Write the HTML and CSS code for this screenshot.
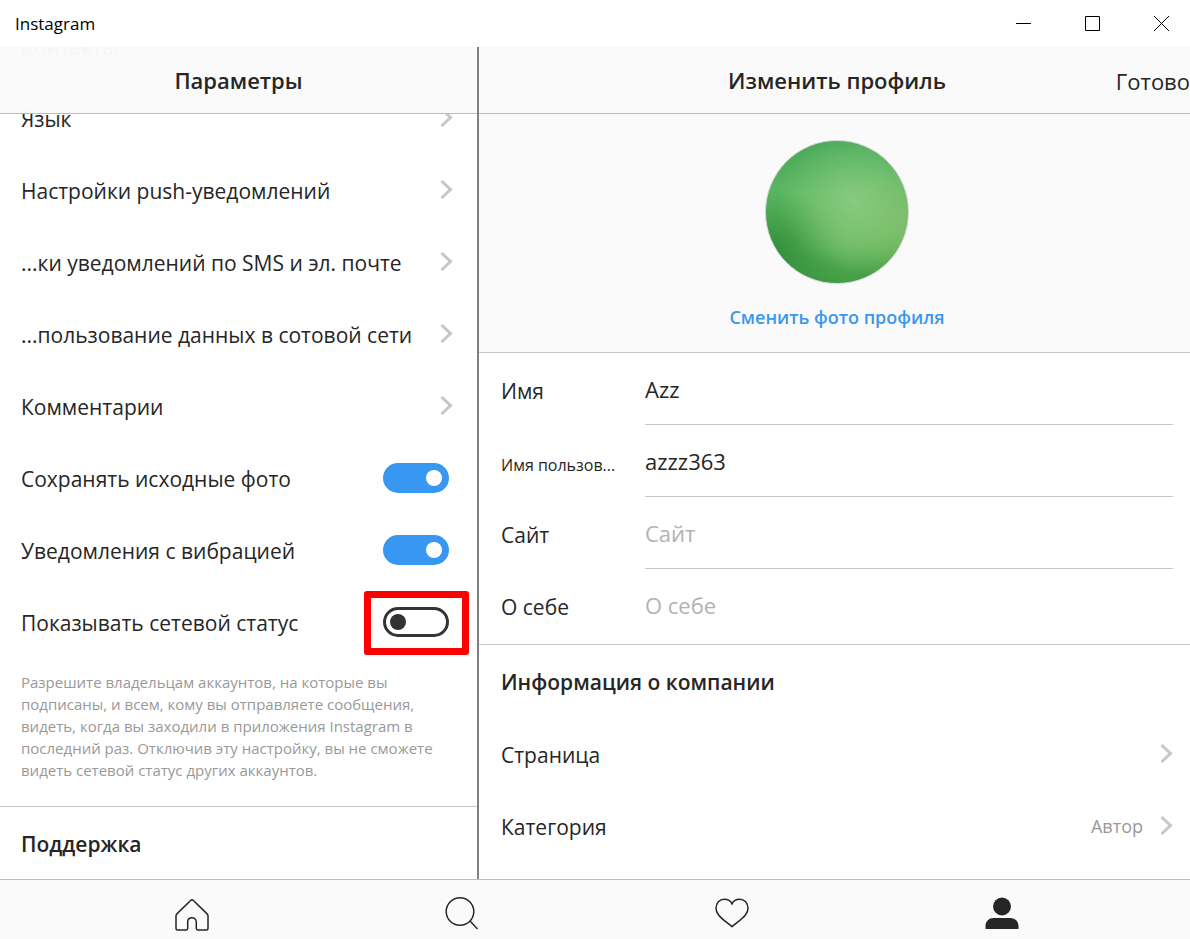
FILE: index.html
```html
<!DOCTYPE html>
<html lang="ru">
<head>
    <meta charset="UTF-8">
    <meta name="viewport" content="width=device-width, initial-scale=1.0">
    <title>Instagram</title>
    <link rel="stylesheet" href="styles.css">
</head>
<body>
    <header class="titlebar">
        <span class="app-name">Instagram</span>
        <div class="window-controls">
            <button class="window-btn" aria-label="Свернуть">
                <svg width="15" height="15" viewBox="0 0 15 15"><path d="M0 7.5h15"/></svg>
            </button>
            <button class="window-btn" aria-label="Развернуть">
                <svg width="15" height="15" viewBox="0 0 15 15"><path d="M.5.5h14v14H.5z"/></svg>
            </button>
            <button class="window-btn" aria-label="Закрыть">
                <svg width="15" height="15" viewBox="0 0 15 15"><path d="M0 0l15 15M15 0L0 15"/></svg>
            </button>
        </div>
    </header>

    <main class="panes">
        <!-- Settings -->
        <section class="pane settings">
            <div class="pane-header settings-header">
                <h1 class="pane-title">Параметры</h1>
            </div>

            <div class="settings-list">
                <a href="#" class="row">
                    <span>Контакты</span>
                    <svg class="chevron" width="13" height="19" viewBox="0 0 13 19"><path d="M1.5 1l9 8.5-9 8.5"/></svg>
                </a>
                <a href="#" class="row">
                    <span>Язык</span>
                    <svg class="chevron" width="13" height="19" viewBox="0 0 13 19"><path d="M1.5 1l9 8.5-9 8.5"/></svg>
                </a>
                <a href="#" class="row">
                    <span>Настройки push-уведомлений</span>
                    <svg class="chevron" width="13" height="19" viewBox="0 0 13 19"><path d="M1.5 1l9 8.5-9 8.5"/></svg>
                </a>
                <a href="#" class="row">
                    <span>...ки уведомлений по SMS и эл. почте</span>
                    <svg class="chevron" width="13" height="19" viewBox="0 0 13 19"><path d="M1.5 1l9 8.5-9 8.5"/></svg>
                </a>
                <a href="#" class="row">
                    <span>...пользование данных в сотовой сети</span>
                    <svg class="chevron" width="13" height="19" viewBox="0 0 13 19"><path d="M1.5 1l9 8.5-9 8.5"/></svg>
                </a>
                <a href="#" class="row">
                    <span>Комментарии</span>
                    <svg class="chevron" width="13" height="19" viewBox="0 0 13 19"><path d="M1.5 1l9 8.5-9 8.5"/></svg>
                </a>
                <div class="row row-toggle">
                    <label for="savePhotos">Сохранять исходные фото</label>
                    <input type="checkbox" class="toggle" id="savePhotos" checked>
                </div>
                <div class="row row-toggle">
                    <label for="vibration">Уведомления с вибрацией</label>
                    <input type="checkbox" class="toggle" id="vibration" checked>
                </div>
                <div class="row row-toggle">
                    <label for="onlineStatus">Показывать сетевой статус</label>
                    <span class="highlight">
                        <input type="checkbox" class="toggle" id="onlineStatus">
                    </span>
                </div>
                <p class="hint">Разрешите владельцам аккаунтов, на которые вы подписаны, и всем, кому вы отправляете сообщения, видеть, когда вы заходили в приложения Instagram в последний раз. Отключив эту настройку, вы не сможете видеть сетевой статус других аккаунтов.</p>
                <h2 class="section-title">Поддержка</h2>
            </div>
        </section>

        <!-- Profile -->
        <section class="pane profile">
            <div class="profile-content">
                <div class="pane-header profile-header">
                    <h1 class="pane-title">Изменить профиль</h1>
                    <button class="done-btn">Готово</button>
                </div>

                <div class="photo">
                    <div class="avatar"></div>
                    <button class="photo-btn">Сменить фото профиля</button>
                </div>

                <form class="profile-form">
                    <div class="field">
                        <label class="field-label" for="name">Имя</label>
                        <input type="text" class="field-input" id="name" value="Azz">
                    </div>
                    <div class="field">
                        <label class="field-label field-label-small" for="username">Имя пользов...</label>
                        <input type="text" class="field-input" id="username" value="azzz363">
                    </div>
                    <div class="field">
                        <label class="field-label" for="site">Сайт</label>
                        <input type="text" class="field-input" id="site" placeholder="Сайт">
                    </div>
                    <div class="field">
                        <label class="field-label" for="bio">О себе</label>
                        <input type="text" class="field-input" id="bio" placeholder="О себе">
                    </div>
                </form>

                <h2 class="section-title">Информация о компании</h2>
                <a href="#" class="row">
                    <span>Страница</span>
                    <svg class="chevron" width="13" height="19" viewBox="0 0 13 19"><path d="M1.5 1l9 8.5-9 8.5"/></svg>
                </a>
                <a href="#" class="row">
                    <span>Категория</span>
                    <span class="row-value">Автор</span>
                    <svg class="chevron" width="13" height="19" viewBox="0 0 13 19"><path d="M1.5 1l9 8.5-9 8.5"/></svg>
                </a>
            </div>
        </section>
    </main>

    <nav class="tabbar">
        <a href="#" class="tab" aria-label="Главная">
            <svg width="36" height="36" viewBox="0 0 36 36"><path d="M2.900 18.900C2.200 19.600 2 20.100 2 20.900v12.500c0 1 .5 1.500 1.500 1.500h8.800c.9 0 1.400-.5 1.400-1.400V27c0-5.700 8.600-5.700 8.600 0v6.500c0 .9.500 1.400 1.400 1.400h8.800c1 0 1.500-.5 1.500-1.500V20.900c0-.8-.2-1.300-.9-2L19.400 5.500c-.9-.9-1.900-.9-2.800 0z"/></svg>
        </a>
        <a href="#" class="tab" aria-label="Поиск">
            <svg width="36" height="36" viewBox="0 0 36 36"><circle cx="16" cy="16.500" r="13.800"/><path d="M26 26l7.500 8"/></svg>
        </a>
        <a href="#" class="tab" aria-label="Действия">
            <svg width="36" height="36" viewBox="0 0 36 36"><path d="M18 31.600C12 26.800 7.500 23.800 4.600 20 2.700 17.600 2 15.700 2 13.200 2 8.200 5.600 4.200 10.300 4.200c3.600 0 6.200 1.500 7.700 4.600 1.500-3.100 4.100-4.600 7.700-4.600 4.700 0 8.300 4 8.300 9 0 2.500-.7 4.400-2.600 6.800-2.900 3.800-7.400 6.800-13.400 11.600z"/></svg>
        </a>
        <a href="#" class="tab tab-active" aria-label="Профиль">
            <svg width="36" height="36" viewBox="0 0 36 36"><circle cx="18" cy="11.500" r="9"/><path d="M1.500 34v-3c0-4.500 3.500-8 8-8h17c4.500 0 8 3.500 8 8v3z"/></svg>
        </a>
    </nav>
</body>
</html>
```

FILE: styles.css
```css
* {
    margin: 0;
    padding: 0;
    box-sizing: border-box;
}

body {
    display: flex;
    flex-direction: column;
    height: 100vh;
    overflow: hidden;
    font-family: 'Open Sans', 'Noto Sans', sans-serif;
    font-size: 21px;
    line-height: 30px;
    color: #262626;
    background: #fff;
}

button,
input {
    font: inherit;
    color: inherit;
    border: none;
    background: none;
}

button {
    cursor: pointer;
}

a {
    color: inherit;
    text-decoration: none;
}

svg {
    display: block;
    fill: none;
}

/* Title bar */
.titlebar {
    display: flex;
    flex-shrink: 0;
    justify-content: space-between;
    height: 47px;
    padding-left: 15px;
}

.app-name {
    font-size: 17px;
    line-height: 47px;
    color: #000;
}

.window-controls {
    display: flex;
}

.window-btn {
    display: flex;
    align-items: center;
    justify-content: center;
    width: 69px;
    padding-left: 12px;
    stroke: #000;
}

/* Panes */
.panes {
    display: grid;
    grid-template-columns: calc(40% + 1px) 1fr;
    flex: 1;
    min-height: 0;
}

.pane {
    position: relative;
    min-width: 0;
    overflow: hidden;
}

.pane-header {
    display: grid;
    align-items: center;
    height: 67px;
    border-bottom: 1px solid #bcbcbc;
    background: rgba(250, 250, 250, 0.98);
}

.pane-title {
    font-size: 22px;
    font-weight: 600;
    text-align: center;
}

.section-title {
    height: 72px;
    padding: 0 22px;
    font-size: 21px;
    font-weight: 600;
    line-height: 74px;
}

.row {
    display: flex;
    align-items: center;
    height: 72px;
    padding: 0 22px;
    white-space: nowrap;
}

.row > :first-child {
    flex: 1;
    padding-top: 2px;
}

.row-value {
    margin-right: 17px;
    font-size: 18px;
    color: #999;
}

.chevron {
    margin-bottom: 2px;
    stroke: #c7c7c7;
    stroke-width: 3;
}

/* Settings */
.settings {
    display: flex;
    flex-direction: column;
    justify-content: flex-end;
}

.settings-header {
    position: absolute;
    top: 0;
    left: 0;
    right: 0;
}

.settings-list {
    flex-shrink: 0;
}

.settings .row {
    padding: 0 24px 0 21px;
}

.settings .row-toggle {
    padding-right: 28px;
}

.settings .section-title {
    padding-left: 21px;
}

.toggle {
    display: block;
    appearance: none;
    width: 66px;
    height: 30px;
    padding: 4px;
    border: 3px solid #333;
    border-radius: 15px;
    cursor: pointer;
}

.toggle::before {
    content: '';
    display: block;
    width: 16px;
    height: 16px;
    border-radius: 50%;
    background: #333;
}

.toggle:checked {
    border-color: #3897f0;
    background: #3897f0;
}

.toggle:checked::before {
    margin-left: auto;
    background: #fff;
}

.highlight {
    position: relative;
}

.highlight::after {
    content: '';
    position: absolute;
    inset: -16px -20px -18px -19px;
    border: 7px solid #f00;
    border-radius: 3px;
    pointer-events: none;
}

.hint {
    padding: 13px 21px 25px;
    border-bottom: 1px solid #c7c7c7;
    font-size: 15px;
    line-height: 22px;
    color: #999;
}

/* Profile */
.profile {
    border-left: 2px solid #808080;
}

/* runs slightly under the window edge */
.profile-content {
    width: calc(100% + 5px);
}

.profile-header {
    grid-template-columns: 1fr auto 1fr;
}

.profile-header .pane-title {
    grid-column: 2;
}

.done-btn {
    justify-self: end;
    padding: 2px 5px 0 0;
    font-size: 22px;
}

.photo {
    display: flex;
    flex-direction: column;
    align-items: center;
    gap: 18px;
    padding: 26px 0 20px;
    border-bottom: 1px solid #c7c7c7;
    background: #fafafa;
}

.avatar {
    width: 144px;
    height: 144px;
    border: 1px solid #d5d5d5;
    border-radius: 50%;
    background:
        radial-gradient(ellipse at 62% 42%, rgba(139, 203, 130, 0.9), rgba(130, 198, 115, 0) 60%),
        radial-gradient(ellipse at 98% 58%, rgba(126, 186, 100, 0.9), rgba(126, 186, 100, 0) 50%),
        radial-gradient(ellipse at 2% 80%, rgba(36, 128, 50, 0.8), rgba(60, 160, 70, 0) 42%),
        linear-gradient(172deg, #45a556 0%, #5cb863 35%, #60b95c 70%, #3c963f 100%);
}

.photo-btn {
    font-size: 18px;
    font-weight: 600;
    color: #3897f0;
}

.profile-form {
    padding: 0 22px 3px;
    border-bottom: 1px solid #c7c7c7;
}

.field {
    display: flex;
    align-items: center;
    height: 72px;
}

.field-label {
    flex: 0 0 144px;
    padding-top: 4px;
}

.field-label-small {
    font-size: 16px;
    padding-top: 8px;
}

.field-input {
    flex: 1;
    min-width: 0;
    height: 72px;
    border-bottom: 1px solid #c7c7c7;
    font-size: 22px;
    outline: none;
}

.field:last-child .field-input {
    border-bottom: none;
}

.field-input::placeholder {
    color: #b2b2b2;
}

.profile .section-title {
    height: 73px;
}

/* Tab bar */
.tabbar {
    display: grid;
    grid-template-columns: repeat(4, 1fr);
    flex-shrink: 0;
    height: 60px;
    padding: 0 53px 0 57px;
    border-top: 1px solid #bcbcbc;
    background: #fafafa;
}

.tab {
    display: flex;
    justify-content: center;
    padding-top: 15px;
    stroke: #262626;
    stroke-width: 1.5;
}

.tab-active {
    stroke: none;
}

.tab-active svg {
    fill: #262626;
}
```
